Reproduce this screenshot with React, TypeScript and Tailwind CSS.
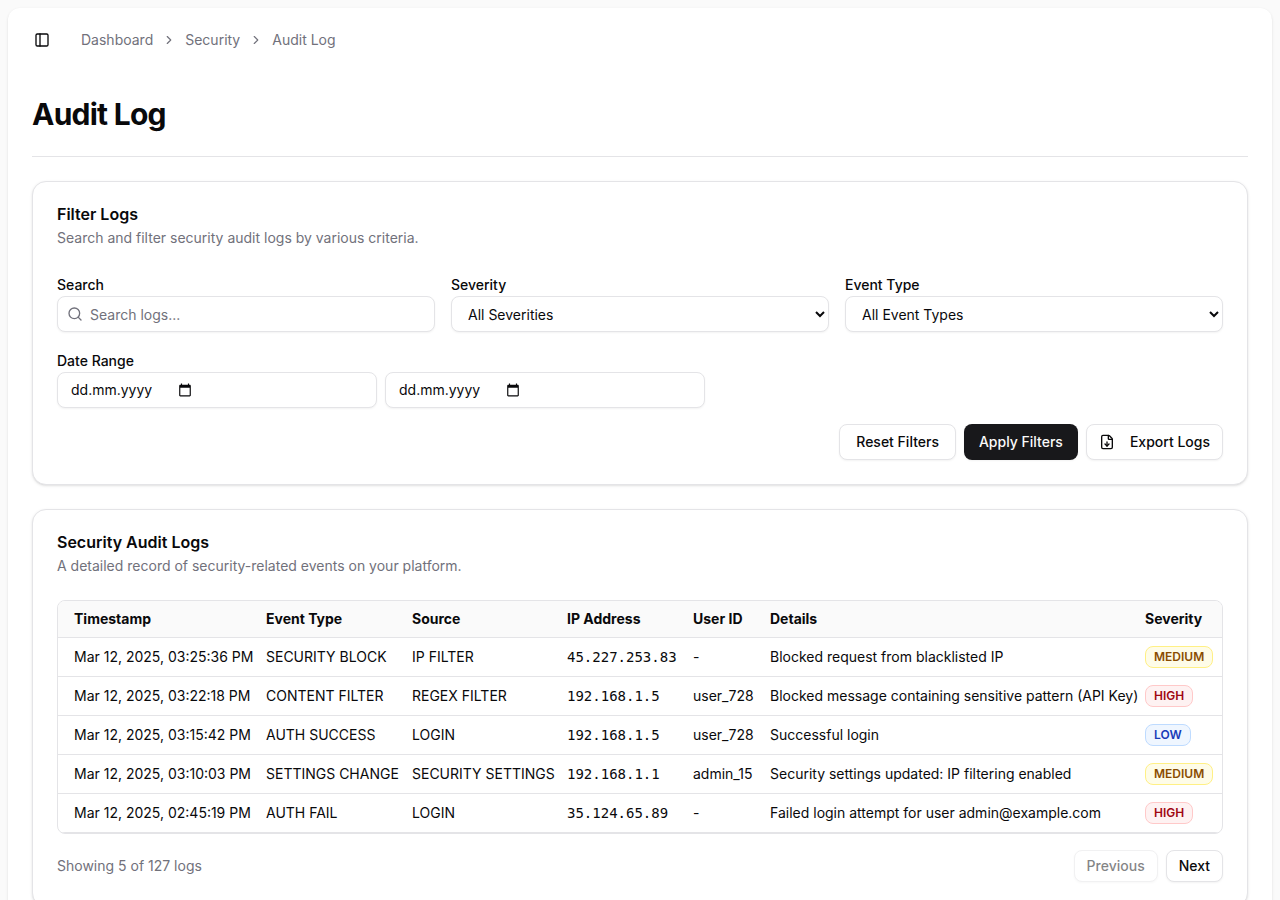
import { useState } from "react";
import { ChevronRight, FileDown, PanelLeft, Search } from "lucide-react";
import clsx from "clsx";

type Severity = "LOW" | "MEDIUM" | "HIGH";

type AuditLog = {
  timestamp: string;
  eventType: string;
  source: string;
  ip: string;
  userId: string;
  details: string;
  severity: Severity;
};

const logs: AuditLog[] = [
  {
    timestamp: "Mar 12, 2025, 03:25:36 PM",
    eventType: "SECURITY BLOCK",
    source: "IP FILTER",
    ip: "45.227.253.83",
    userId: "-",
    details: "Blocked request from blacklisted IP",
    severity: "MEDIUM",
  },
  {
    timestamp: "Mar 12, 2025, 03:22:18 PM",
    eventType: "CONTENT FILTER",
    source: "REGEX FILTER",
    ip: "192.168.1.5",
    userId: "user_728",
    details: "Blocked message containing sensitive pattern (API Key)",
    severity: "HIGH",
  },
  {
    timestamp: "Mar 12, 2025, 03:15:42 PM",
    eventType: "AUTH SUCCESS",
    source: "LOGIN",
    ip: "192.168.1.5",
    userId: "user_728",
    details: "Successful login",
    severity: "LOW",
  },
  {
    timestamp: "Mar 12, 2025, 03:10:03 PM",
    eventType: "SETTINGS CHANGE",
    source: "SECURITY SETTINGS",
    ip: "192.168.1.1",
    userId: "admin_15",
    details: "Security settings updated: IP filtering enabled",
    severity: "MEDIUM",
  },
  {
    timestamp: "Mar 12, 2025, 02:45:19 PM",
    eventType: "AUTH FAIL",
    source: "LOGIN",
    ip: "35.124.65.89",
    userId: "-",
    details: "Failed login attempt for user admin@example.com",
    severity: "HIGH",
  },
];

const columns = [
  { name: "Timestamp", width: "w-50" },
  { name: "Event Type", width: "w-[146px]" },
  { name: "Source", width: "w-[155px]" },
  { name: "IP Address", width: "w-[126px]" },
  { name: "User ID", width: "w-[77px]" },
  { name: "Details", width: "w-[375px]" },
  { name: "Severity", width: "w-auto" },
];

const severityStyles: Record<Severity, string> = {
  LOW: "border-blue-200 bg-blue-50 text-blue-800",
  MEDIUM: "border-yellow-200 bg-yellow-50 text-yellow-800",
  HIGH: "border-red-200 bg-red-50 text-red-800",
};

const fieldClass = "h-9 w-full rounded-lg border border-[#e4e4e7] bg-white text-sm shadow-xs";

function Header() {
  return (
    <header className="flex h-16 items-center gap-4 px-5">
      <button aria-label="Toggle Sidebar" className="flex size-7 items-center justify-center rounded-lg hover:bg-gray-100">
        <PanelLeft className="size-4" />
      </button>
      <nav aria-label="Breadcrumb" className="pl-[9px]">
        <ol className="flex items-center gap-[9px] text-sm text-[#71717b]">
          <li>
            <a href="#dashboard">Dashboard</a>
          </li>
          <ChevronRight className="size-3.5" />
          <li>
            <a href="#security">Security</a>
          </li>
          <ChevronRight className="size-3.5" />
          <li>
            <a href="#audit-log">Audit Log</a>
          </li>
        </ol>
      </nav>
    </header>
  );
}

function Card({ title, description, children }: { title: string; description: string; children: React.ReactNode }) {
  return (
    <section className="flex flex-col gap-6 rounded-[14px] border border-[#e4e4e7] bg-white p-6 shadow-sm">
      <div className="flex flex-col gap-1.5">
        <h2 className="leading-none font-semibold">{title}</h2>
        <p className="text-sm text-[#71717b]">{description}</p>
      </div>
      {children}
    </section>
  );
}

function Button({ className, ...props }: React.ComponentProps<"button">) {
  return (
    <button
      className={clsx(
        "inline-flex items-center justify-center rounded-lg text-sm font-medium shadow-xs disabled:opacity-50",
        className
      )}
      {...props}
    />
  );
}

function SelectField({ id, label, options }: { id: string; label: string; options: string[] }) {
  return (
    <div>
      <label htmlFor={id} className="text-sm font-medium">
        {label}
      </label>
      <select id={id} className={clsx(fieldClass, "block px-3")}>
        {options.map((option) => (
          <option key={option}>{option}</option>
        ))}
      </select>
    </div>
  );
}

function CalendarIcon() {
  return (
    <svg viewBox="0 0 24 24" className="size-3.5" fill="currentColor" aria-hidden="true">
      <path d="M20 3h-1V1h-2v2H7V1H5v2H4c-1.1 0-2 .9-2 2v16c0 1.1.9 2 2 2h16c1.1 0 2-.9 2-2V5c0-1.1-.9-2-2-2zm0 18H4V8h16v13z" />
    </svg>
  );
}

function DateField({ id, label }: { id: string; label: string }) {
  return (
    <div className={clsx(fieldClass, "flex max-w-80 items-center px-3")}>
      <input
        id={id}
        aria-label={label}
        placeholder="dd.mm.yyyy"
        className="w-27 bg-transparent pl-px outline-none placeholder:text-[#09090b]"
      />
      <button aria-label={`Open calendar for ${label}`}>
        <CalendarIcon />
      </button>
    </div>
  );
}

function Filters() {
  const [search, setSearch] = useState("");

  return (
    <Card title="Filter Logs" description="Search and filter security audit logs by various criteria.">
      <div className="flex flex-col gap-4">
        <div className="grid grid-cols-1 gap-4 md:grid-cols-3">
          <div>
            <label htmlFor="search" className="text-sm font-medium">
              Search
            </label>
            <div className="relative">
              <Search className="absolute top-2.5 left-2.5 size-4 text-[#71717b]" />
              <input
                id="search"
                value={search}
                onChange={(e) => setSearch(e.target.value)}
                placeholder="Search logs..."
                className={clsx(fieldClass, "block pr-3 pl-8 placeholder:text-[#71717b]")}
              />
            </div>
          </div>
          <SelectField id="severity" label="Severity" options={["All Severities", "Low", "Medium", "High"]} />
          <SelectField
            id="event-type"
            label="Event Type"
            options={["All Event Types", "Security Block", "Content Filter", "Auth Success", "Auth Fail"]}
          />
        </div>
        <div>
          <label htmlFor="date-from" className="text-sm font-medium">
            Date Range
          </label>
          <div className="flex gap-2">
            <DateField id="date-from" label="Start date" />
            <DateField id="date-to" label="End date" />
          </div>
        </div>
        <div className="flex justify-end gap-2">
          <Button className="h-9 border border-[#e4e4e7] bg-white px-4" onClick={() => setSearch("")}>
            Reset Filters
          </Button>
          <Button className="h-9 bg-[#18181b] px-[15px] text-[#fafafa]">Apply Filters</Button>
          <Button className="h-9 gap-[15px] border border-[#e4e4e7] bg-white px-3">
            <FileDown className="size-4" />
            Export Logs
          </Button>
        </div>
      </div>
    </Card>
  );
}

function LogsTable() {
  return (
    <div className="overflow-x-auto rounded-lg border border-[#e4e4e7]">
      <table className="w-full min-w-[1164px] table-fixed text-sm whitespace-nowrap">
        <thead>
          <tr className="border-b border-[#e4e4e7] bg-[#fafafa] text-left">
            {columns.map((column) => (
              <th key={column.name} className={clsx("p-2 font-bold first:pl-4", column.width)}>
                {column.name}
              </th>
            ))}
          </tr>
        </thead>
        <tbody>
          {logs.map((log) => (
            <tr key={log.timestamp} className="border-b border-[#e4e4e7]">
              <td className="p-2 pl-4">{log.timestamp}</td>
              <td className="p-2">{log.eventType}</td>
              <td className="p-2">{log.source}</td>
              <td className="p-2 font-['DejaVu_Sans_Mono',monospace]">{log.ip}</td>
              <td className="p-2">{log.userId}</td>
              <td className="p-2">{log.details}</td>
              <td className="p-2">
                <span
                  className={clsx(
                    "flex w-fit rounded-lg border px-2 py-0.5 text-xs font-semibold",
                    severityStyles[log.severity]
                  )}
                >
                  {log.severity}
                </span>
              </td>
            </tr>
          ))}
        </tbody>
      </table>
    </div>
  );
}

export default function App() {
  return (
    <div className="flex min-h-screen flex-col bg-[#fafafa] p-2 font-[Inter,sans-serif] text-[#09090b]">
      <main className="flex-1 rounded-xl bg-white shadow-sm">
        <Header />
        <div className="flex flex-col gap-6 p-6">
          <div className="border-b border-[#e4e4e7] pb-6">
            <h1 className="text-3xl font-bold tracking-tight">Audit Log</h1>
          </div>
          <Filters />
          <Card title="Security Audit Logs" description="A detailed record of security-related events on your platform.">
            <div className="flex flex-col gap-4">
              <LogsTable />
              <div className="flex items-center justify-between">
                <p className="text-sm text-[#71717b]">Showing {logs.length} of 127 logs</p>
                <div className="flex gap-2">
                  <Button disabled className="h-8 border border-[#e4e4e7] bg-white px-3">
                    Previous
                  </Button>
                  <Button className="h-8 border border-[#e4e4e7] bg-white px-3">Next</Button>
                </div>
              </div>
            </div>
          </Card>
        </div>
      </main>
    </div>
  );
}
